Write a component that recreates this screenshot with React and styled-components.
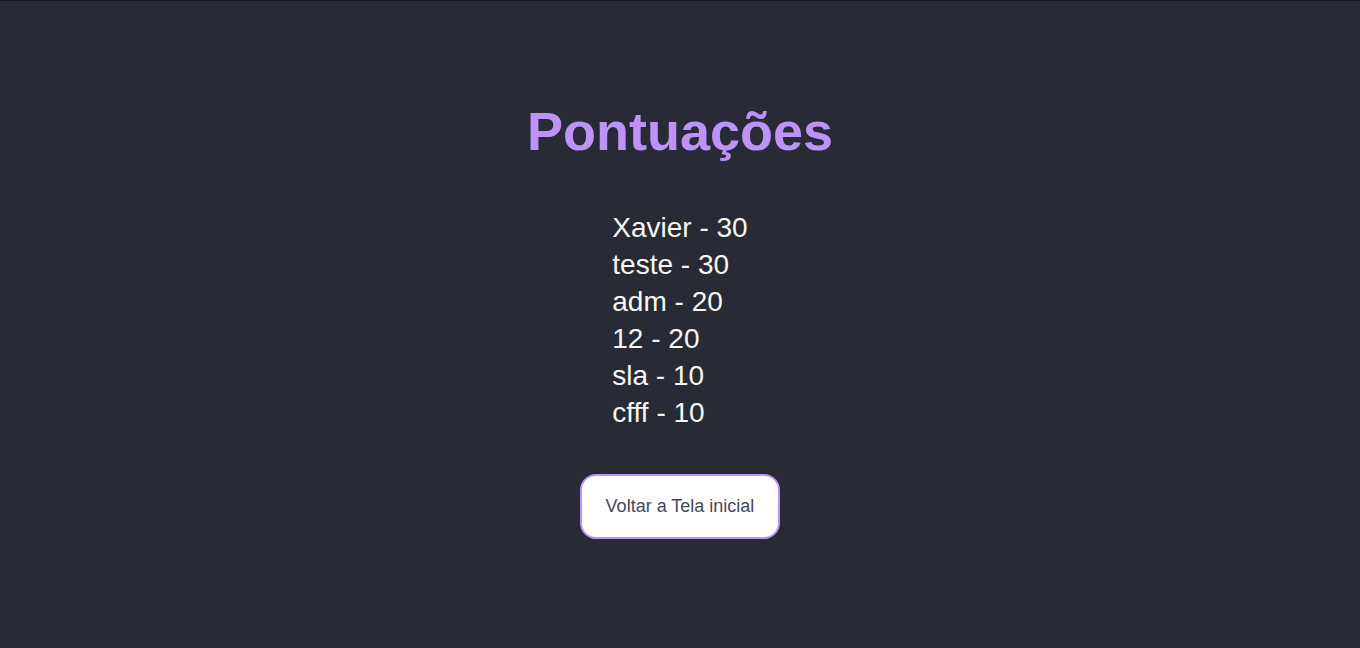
import styled, { createGlobalStyle } from 'styled-components';

const GlobalStyle = createGlobalStyle`
  html, body {
    margin: 0;
    padding: 0;
    background: #282a36;
  }
  body {
    font-family: 'Liberation Sans', Arial, sans-serif;
  }
`;

const Page = styled.main`
  box-sizing: border-box;
  min-height: 648px;
  border-top: 1px solid #191a21;
  background-color: #282a36;
  display: flex;
  flex-direction: column;
  align-items: center;
  padding-top: 98px;
`;

const Title = styled.h1`
  margin: 0;
  color: #bd93f9;
  font-size: 54px;
  font-weight: 700;
  line-height: 64px;
`;

const ScoreList = styled.ul`
  list-style: none;
  margin: 46px 0 0;
  padding: 0;
  color: #f8f8f2;
  font-size: 28px;
  line-height: 37px;
`;

const ScoreItem = styled.li`
  margin: 0;
`;

const BackButton = styled.button`
  margin-top: 43px;
  width: 200px;
  height: 65px;
  background: #ffffff;
  border: 2px solid #bd93f9;
  border-radius: 16px;
  color: #44475a;
  font-family: 'Liberation Sans', Arial, sans-serif;
  font-size: 18px;
  cursor: pointer;
`;

const scores = [
  { name: 'Xavier', points: 30 },
  { name: 'teste', points: 30 },
  { name: 'adm', points: 20 },
  { name: '12', points: 20 },
  { name: 'sla', points: 10 },
  { name: 'cfff', points: 10 },
];

const App = () => {
  return (
    <>
      <GlobalStyle />
      <Page>
        <Title>Pontuações</Title>
        <ScoreList>
          {scores.map((s, i) => (
            <ScoreItem key={i}>
              {s.name} - {s.points}
            </ScoreItem>
          ))}
        </ScoreList>
        <BackButton>Voltar a Tela inicial</BackButton>
      </Page>
    </>
  );
};

export default App;
